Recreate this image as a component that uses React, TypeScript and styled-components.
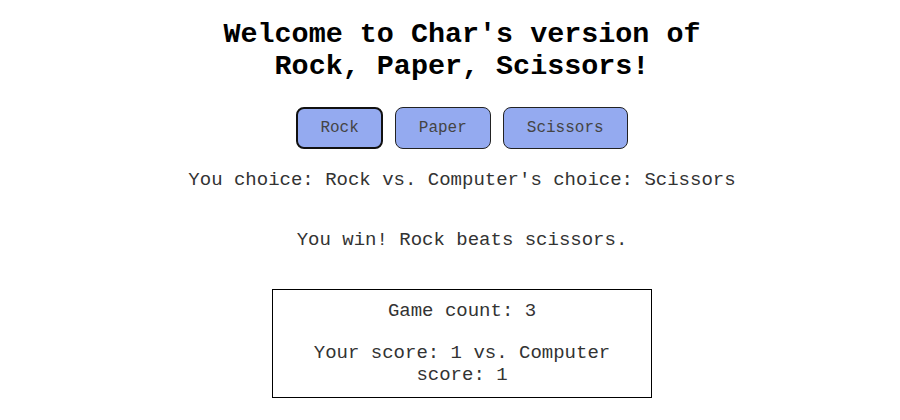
import React, { useState } from 'react';
import styled, { createGlobalStyle } from 'styled-components';

type Choice = 'Rock' | 'Paper' | 'Scissors';

const choices: Choice[] = ['Rock', 'Paper', 'Scissors'];

const GlobalStyle = createGlobalStyle`
  html, body {
    margin: 0;
    padding: 0;
    background: #ffffff;
  }
  body {
    font-family: "Liberation Mono", "Courier New", monospace;
    color: #333;
  }
`;

export default function App() {
  const [selected] = useState<Choice>('Rock');

  return (
    <>
      <GlobalStyle />
      <S.Page>
        <S.Title>
          Welcome to Char's version of
          <br />
          Rock, Paper, Scissors!
        </S.Title>
        <S.Buttons>
          {choices.map((c) => (
            <S.ChoiceButton key={c} $active={c === selected}>
              {c}
            </S.ChoiceButton>
          ))}
        </S.Buttons>
        <S.Choice>You choice: Rock vs. Computer's choice: Scissors</S.Choice>
        <S.Result>You win! Rock beats scissors.</S.Result>
        <S.ScoreBox>
          <S.ScoreLine>Game count: 3</S.ScoreLine>
          <S.ScoreLine>Your score: 1 vs. Computer score: 1</S.ScoreLine>
        </S.ScoreBox>
      </S.Page>
    </>
  );
}

const S = {
  Page: styled.div`
    display: flex;
    flex-direction: column;
    align-items: center;
    text-align: center;
    padding-left: 24px;
  `,
  Title: styled.h1`
    margin: 19px 0 0;
    font-size: 28.4px;
    line-height: 32px;
    font-weight: 700;
    color: #000;
  `,
  Buttons: styled.div`
    display: flex;
    gap: 12px;
    margin-top: 24px;
  `,
  ChoiceButton: styled.button<{ $active?: boolean }>`
    height: 42px;
    padding: ${(p) => (p.$active ? '0 22px' : '0 23px')};
    font-family: "Liberation Mono", "Courier New", monospace;
    font-size: 16px;
    color: #444;
    background-color: #94aaf0;
    border: ${(p) => (p.$active ? '2px solid #111' : '1px solid #222')};
    border-radius: 8px;
    cursor: pointer;
  `,
  Choice: styled.p`
    margin: 20px 0 0;
    font-size: 19px;
    line-height: 22px;
  `,
  Result: styled.p`
    margin: 38px 0 0;
    font-size: 19px;
    line-height: 22px;
  `,
  ScoreBox: styled.div`
    box-sizing: border-box;
    width: 380px;
    margin-top: 38px;
    padding: 10px 30px 11px;
    border: 1px solid #000;
    display: flex;
    flex-direction: column;
    gap: 20px;
  `,
  ScoreLine: styled.p`
    margin: 0;
    font-size: 19px;
    line-height: 22px;
  `,
};
